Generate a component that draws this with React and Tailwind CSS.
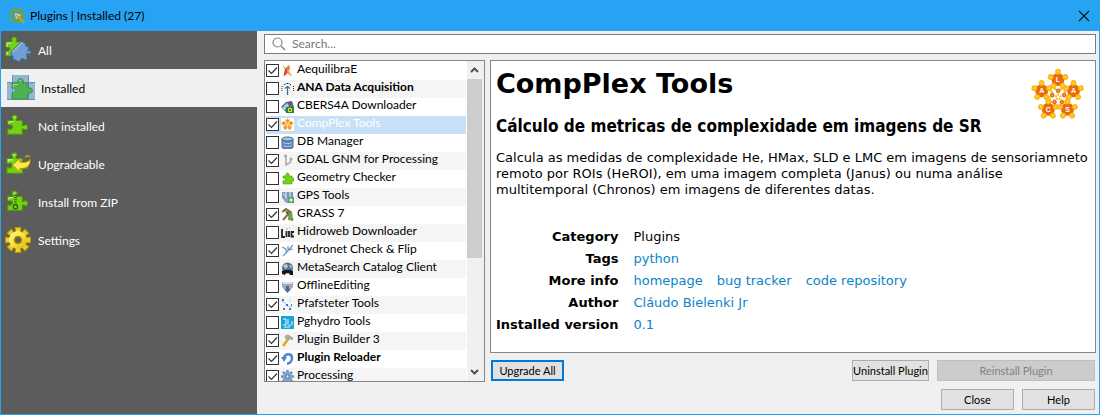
import React from "react";

const PUZZLE =
  "M2 7h6c1-1-1-2-1-4 0-3 6-3 6 0 0 2-2 3-1 4h7v6c1 1 2-1 4-1 3 0 3 6 0 6-2 0-3-2-4-1v6H2v-6c1-1 2 1 4 0 2-1 2-4 0-5-2 0-3 1-4 0z";

function Puzzle({ fill = "#73d216", stroke = "#4e9a06" }) {
  return (
    <>
      <path d={PUZZLE} fill={fill} stroke={stroke} strokeWidth="1.2" strokeLinejoin="round" />
      <path d="M3.500 11V8.500h5M9 4l2-1.500" fill="none" stroke="#fff" strokeOpacity=".65" strokeWidth="1.2" />
    </>
  );
}

function QgisLogo() {
  return (
    <svg viewBox="0 0 16 16" className="size-4" aria-hidden="true">
      <circle cx="8" cy="7.500" r="5.800" fill="none" stroke="#7f9f2b" strokeWidth="3" />
      <path d="M9 8.500l6 6" stroke="#a5ad2e" strokeWidth="3" />
      <path d="M6 5l6 2-5 4z" fill="#f5e08a" />
      <path d="M7 6l3 2-2 2z" fill="#ee7913" />
    </svg>
  );
}

function AllIcon() {
  return (
    <svg viewBox="0 0 28 28" className="size-7" aria-hidden="true">
      <path d="M2 6h6c0-2-1-5 2-5s3 3 2 5h5v14H2v-5c2 0 4 0 4-2s-2-2-4-2z" fill="#73d216" stroke="#4e9a06" />
      <path d="M3 11V7h5M3 19v-3" fill="none" stroke="#d8f7b0" />
      <path
        d="M7 16L18 5l4 3c-1 2 0 3 2 2l1 3-2 2c2-1 5 0 4 2s-3 1-4 0v7h-3c0-2-3-2-3 0l-3 2-2-2H9v-4c-2 1-2-1-2-4z"
        fill="#729fcf" stroke="#3465a4" strokeLinejoin="round"
      />
      <path d="M8.500 16L18 6.500" stroke="#cfe0f4" />
    </svg>
  );
}

function InstalledIcon() {
  return (
    <svg viewBox="0 0 28 26" className="h-[26px] w-7" aria-hidden="true">
      <path d="M5 0h17v7h6v18H0V7h5z" fill="#93b7d0" />
      <path d="M5.500 0v25M21.500 0v25M0 7.500h28M0 24.500h28" stroke="#6a93ae" fill="none" />
      <path d="M5 8h6c-2-6 7-6 5 0h5v5c6-1 6 6 0 5v6H5v-6c5 0 5-5 0-5z" fill="#4db34f" stroke="#3a8c5a" />
      <path d="M6.500 12V9.500H11M12 6l2-1" stroke="#a5dbab" fill="none" />
    </svg>
  );
}

function NotInstalledIcon() {
  return (
    <svg viewBox="0 0 28 27" className="h-6 w-6" aria-hidden="true">
      <Puzzle />
    </svg>
  );
}

function UpgradeIcon() {
  return (
    <svg viewBox="0 0 28 26" className="h-6 w-7" aria-hidden="true">
      <Puzzle />
      <path d="M21 5c3-3 7-2 6 1-1-1-3-1-5 0z" fill="#c4a000" />
      <path d="M8 14l8-7v4c6 1 10-1 11-3 1 7-4 10-11 10v4z" fill="#fce94f" stroke="#b89500" strokeLinejoin="round" />
    </svg>
  );
}

function ZipIcon() {
  return (
    <svg viewBox="0 0 28 27" className="h-6 w-6" aria-hidden="true">
      <Puzzle />
      <path d="M11 5v12" stroke="#3a6310" strokeWidth="3.500" strokeDasharray="1.300 1.300" />
      <circle cx="11" cy="19" r="2.500" fill="#73d216" stroke="#2e5a06" strokeWidth="1.500" />
    </svg>
  );
}

function GearIcon() {
  return (
    <svg viewBox="-14 -14 28 28" className="size-7" aria-hidden="true">
      <defs>
        <linearGradient id="gold" x1="0" y1="0" x2="1" y2="1">
          <stop offset="0" stopColor="#fff7a8" />
          <stop offset=".5" stopColor="#fbe233" />
          <stop offset="1" stopColor="#d6b000" />
        </linearGradient>
      </defs>
      <g fill="#ecd030" stroke="#b79400">
        {[0, 45, 90, 135].map((a) => (
          <path key={a} d="M-3-12.500h6l-1 6v13l1 6h-6l1-6v-13z" transform={`rotate(${a})`} />
        ))}
      </g>
      <circle r="9" fill="url(#gold)" />
      <circle r="3.500" fill="#5c5c5c" stroke="#a98a00" strokeWidth="1.500" />
    </svg>
  );
}

function CompPlexLogo({ className, viewBox = "0 0 64 58" }) {
  const nodes = [
    ["L", 32, 12.5],
    ["A", 47.5, 23.7],
    ["S", 41.5, 42.3],
    ["C", 22.3, 42.3],
    ["A", 15.7, 23.7],
  ];
  const spokes = [0, 72, 144, 216, 288];
  return (
    <svg viewBox={viewBox} className={className} aria-hidden="true">
      <rect width="64" height="58" fill="#fff" />
      {nodes.map(([letter, x, y]) => (
        <g key={`${x}-${y}`} transform={`translate(${x} ${y})`}>
          <circle r="6.500" fill="#e86a0a" />
          {spokes.map((a) => (
            <g key={a} transform={`rotate(${a})`}>
              <circle cy="-7.800" r="2.900" fill="#fbba13" />
              <circle cy="-7.800" r="1" fill="#fdd873" />
            </g>
          ))}
          <text y="2.500" textAnchor="middle" fontSize="7" fontWeight="700" fill="#fff" fontFamily="Liberation Sans, sans-serif">
            {letter}
          </text>
        </g>
      ))}
      {spokes.map((a) => (
        <g key={a} transform={`translate(32.2 30) rotate(${a})`}>
          <circle cx="3" cy="-8" r="1.300" fill="#fbba13" />
          <circle cx="-3" cy="-8" r="1.300" fill="#fbba13" />
          <circle cy="-6.200" r="2.300" fill="#e86a0a" />
          <circle cy="-6.200" r=".7" fill="#f9c9a0" />
          <circle cy="-2.300" r="1.100" fill="#fbba13" />
        </g>
      ))}
    </svg>
  );
}

const icons = {
  aequilibrae: (
    <>
      <path d="M1 2c3 1 4 5 1 10 3 0 4-4 3-7-1-2-2-3-4-3z" fill="#7fae3a" />
      <path d="M8 1c2 4-1 9-5 11 0-4 1-8 5-11z" fill="#e2452c" />
      <path d="M8 1c-1 6 1 9 4 11-4 0-6-3-6-6 0-2 1-4 2-5z" fill="#f0a03c" />
    </>
  ),
  ana: (
    <>
      <path d="M6.500 4v9M4 6.500l2.500-2L9 6.500" stroke="#3b6ea8" strokeWidth="1.300" fill="none" />
      <path d="M3 3l2-1.500h3L10 3" stroke="#333" strokeDasharray="2 1" fill="none" />
      <path d="M1 4v6M12.500 4v6" stroke="#222" strokeDasharray="1 1" />
    </>
  ),
  cbers: (
    <>
      <path d="M0 7l5-5 6-1 2 6-7 6z" fill="#46708f" />
      <path d="M1 8l5-5 2 3-4 4z" fill="#b9cbd9" />
      <path d="M7 3l3-2 1 4z" fill="#b33" />
      <rect x="5" y="7" width="8" height="6" fill="#1c8c3a" />
      <circle cx="9" cy="10" r="2.200" fill="#ffdf2b" />
      <circle cx="9" cy="10" r="1" fill="#234a9c" />
    </>
  ),
  db: (
    <>
      <path d="M1 3v8c0 3 11 3 11 0V3z" fill="#5f88b5" stroke="#41658e" />
      <ellipse cx="6.500" cy="3" rx="5.500" ry="2" fill="#a9c5e2" stroke="#41658e" />
      <path d="M1.500 6c1 2 9 2 10 0M1.500 9c1 2 9 2 10 0" stroke="#b5cce4" fill="none" />
    </>
  ),
  branch: (
    <>
      <path d="M5 2v10M5 10c3 0 5-2 5-5" stroke="#a8a8a8" strokeWidth="1.500" fill="none" />
      <circle cx="4.500" cy="2" r="1.500" fill="#a8a8a8" />
      <circle cx="10" cy="5" r="1.500" fill="#a8a8a8" />
    </>
  ),
  puzzle: <path d="M2 4h3c-1-4 4-4 3 0h3v2c3-1 3 4 0 3v3H2V9c3 0 3-3 0-3z" fill="#73d216" stroke="#4e9a06" strokeWidth=".6" />,
  gps: (
    <>
      <rect x="1" y="2" width="11" height="6" fill="#7898bc" />
      <path d="M2 3l3 4M5 2v6M9 2v6M2 9l4 3" stroke="#e5edf5" />
      <path d="M1 8l4 5h3V8z" fill="#93a5ba" />
      <rect x="7" y="7" width="6" height="6" fill="#5aa06a" />
      <path d="M10 8v4M8 10h4" stroke="#fff" />
    </>
  ),
  grass: (
    <>
      <path d="M1 4l4-3 3 2-2 2 6 7M2 12l8-9" stroke="#8c713f" strokeWidth="2" fill="none" />
      <path d="M7 12c0-5 2-8 4-9l1 10z" fill="#6e9c50" />
      <path d="M3 2l4 3" stroke="#444" />
    </>
  ),
  hidroweb: (
    <>
      <path d="M1 3v8h3M5.500 5v6M8 5v6M13 6h-2.500v4.500H13" stroke="#222" strokeWidth="1.800" fill="none" />
      <path d="M5 3h2M8 2h1" stroke="#7fb3d0" />
    </>
  ),
  hydronet: (
    <>
      <path d="M2 12l3-3 7-8M5 9V5L1 3M7 6V2M8 6l4-1" stroke="#5b9fd0" strokeWidth="1.200" fill="none" />
      <path d="M3 4l2 1M8 5l2-2" stroke="#d06a6a" />
    </>
  ),
  metasearch: (
    <>
      <circle cx="6.500" cy="6" r="5.500" fill="#54718f" />
      <path d="M2 3l4-1 1 3-3 2zM8 3l3 1-1 3z" fill="#b8cada" />
      <path d="M1 12V9l3-1h5l3 1v4H9l-1-2H5l-1 2z" fill="#151515" />
    </>
  ),
  offline: (
    <>
      <path d="M1 2h11v5l-3 3H4L1 7z" fill="#a3adb8" />
      <path d="M2 2h9v2H2z" fill="#dde2e8" />
      <path d="M5 6h3v3h2l-3.500 4L3 9h2z" fill="#456b9b" />
    </>
  ),
  pfafsteter: (
    <>
      <rect width="13" height="13" fill="#f4f7fa" />
      <path d="M0 3l4 2 2 3 5 1M8 1l2 3" stroke="#a8d0df" fill="none" />
      <path d="M1 2h2M5 7h2M10 7h1M2 11h2M8 11h2" stroke="#2a36c0" strokeWidth="1.500" />
    </>
  ),
  pghydro: (
    <>
      <rect width="13" height="13" fill="#18a6d8" />
      <path d="M2 3h3v6H2M7 3v5c0 2 4 2 4 0V5M3 11h6" stroke="#e5f6fc" fill="none" />
    </>
  ),
  builder: (
    <>
      <path d="M2 12l6-8" stroke="#e3a324" strokeWidth="2.500" />
      <path d="M4 2l3-1 5 3-1 2-3-2-3 1z" fill="#aab0b6" stroke="#7b8086" strokeWidth=".5" />
    </>
  ),
  reloader: (
    <>
      <path d="M3 6c1-5 8-5 8 0 0 4-2 5-5 6" stroke="#4d86d2" strokeWidth="2.500" fill="none" />
      <path d="M0 5h6l-3 5z" fill="#4d86d2" />
    </>
  ),
  processing: (
    <>
      {[0, 45, 90, 135].map((a) => (
        <rect key={a} x="5.200" y="0" width="2.600" height="13" fill="#6b93c4" transform={`rotate(${a} 6.5 6.5)`} />
      ))}
      <circle cx="6.500" cy="6.500" r="4.500" fill="#7ea3d0" />
      <circle cx="6.500" cy="6.500" r="1.700" fill="#dfe9f4" stroke="#4a719f" />
    </>
  ),
};

const plugins = [
  { name: "AequilibraE", icon: "aequilibrae", on: true },
  { name: "ANA Data Acquisition", icon: "ana", bold: true },
  { name: "CBERS4A Downloader", icon: "cbers" },
  { name: "CompPlex Tools", icon: "compplex", on: true, selected: true },
  { name: "DB Manager", icon: "db" },
  { name: "GDAL GNM for Processing", icon: "branch", on: true },
  { name: "Geometry Checker", icon: "puzzle" },
  { name: "GPS Tools", icon: "gps" },
  { name: "GRASS 7", icon: "grass", on: true },
  { name: "Hidroweb Downloader", icon: "hidroweb" },
  { name: "Hydronet Check & Flip", icon: "hydronet", on: true },
  { name: "MetaSearch Catalog Client", icon: "metasearch" },
  { name: "OfflineEditing", icon: "offline" },
  { name: "Pfafsteter Tools", icon: "pfafsteter", on: true },
  { name: "Pghydro Tools", icon: "pghydro" },
  { name: "Plugin Builder 3", icon: "builder", on: true },
  { name: "Plugin Reloader", icon: "reloader", on: true, bold: true },
  { name: "Processing", icon: "processing", on: true },
];

const tabs = [
  { name: "All", Icon: AllIcon },
  { name: "Installed", Icon: InstalledIcon, active: true },
  { name: "Not installed", Icon: NotInstalledIcon },
  { name: "Upgradeable", Icon: UpgradeIcon },
  { name: "Install from ZIP", Icon: ZipIcon },
  { name: "Settings", Icon: GearIcon },
];

function PluginRow({ plugin }) {
  const tone = plugin.selected ? "bg-[#c7e0f7] text-white" : "odd:bg-white even:bg-[#f5f5f5]";
  return (
    <li className={`h-[18px] ${tone}`}>
      <label className="flex h-full items-center">
        <span className="mb-px grid shrink-0">
          <input
            type="checkbox"
            defaultChecked={plugin.on}
            className="peer col-start-1 row-start-1 size-[13px] appearance-none border border-[#333] bg-white"
          />
          <svg
            viewBox="0 0 13 13"
            className="pointer-events-none invisible col-start-1 row-start-1 size-[13px] peer-checked:visible"
            aria-hidden="true"
          >
            <path d="M2.500 6.500l3 3 5.500-6" fill="none" stroke="#333" strokeWidth="1.200" />
          </svg>
        </span>
        {plugin.icon === "compplex" ? (
          <CompPlexLogo viewBox="4 1 56 56" className="mb-px ml-0.5 size-[13px] shrink-0" />
        ) : (
          <svg viewBox="0 0 13 13" className="mb-px ml-0.5 size-[13px] shrink-0" aria-hidden="true">
            {icons[plugin.icon]}
          </svg>
        )}
        <span className={`mb-1 ml-[3px] leading-[14px] whitespace-nowrap ${plugin.bold ? "font-bold" : ""}`}>{plugin.name}</span>
      </label>
    </li>
  );
}

function Chevron({ down }) {
  return (
    <svg viewBox="0 0 9 6" className="h-1.5 w-[9px]" aria-hidden="true">
      <path d={down ? "M1 1l3.500 3.500L8 1" : "M1 5l3.500-3.500L8 5"} fill="none" stroke="#505050" strokeWidth="2" />
    </svg>
  );
}

function Field({ label, children }) {
  return (
    <tr className="h-[22px]">
      <th scope="row" className="pr-[15px] text-right font-bold whitespace-nowrap">{label}</th>
      <td>{children}</td>
    </tr>
  );
}

const button = "h-[21px] border border-[#adadad] bg-[#e1e1e1] text-center leading-4 whitespace-nowrap";
const link = "text-[#0a84c6]";

export default function App() {
  return (
    <div className="flex h-screen flex-col border border-[#26a4f3] bg-[#f0f0f0] font-['Lato',sans-serif] text-[12px] text-black">
      <header className="flex h-[30px] shrink-0 items-center bg-[#26a4f3] pr-[9px] pl-2">
        <QgisLogo />
        <h1 className="ml-[5px]">Plugins | Installed (27)</h1>
        <button aria-label="Close window" className="ml-auto">
          <svg viewBox="0 0 12 12" className="size-3" aria-hidden="true">
            <path d="M1 1l10 10M11 1L1 11" stroke="#111" strokeWidth="1.100" />
          </svg>
        </button>
      </header>

      <div className="flex min-h-0 flex-1">
        <nav className="w-64 shrink-0 bg-[#5c5c5c] text-white">
          {tabs.map(({ name, Icon, active }) => (
            <button
              key={name}
              className={`flex h-[38px] w-full items-center text-left ${active ? "gap-1.5 bg-[#f0f0f0] pl-1.5 text-black" : "gap-1.5 pl-[3px]"}`}
            >
              <span className="flex w-7 shrink-0 justify-center"><Icon /></span>
              <span className="pt-0.5">{name}</span>
            </button>
          ))}
        </nav>

        <main className="flex min-w-0 flex-1 flex-col pt-[3px] pr-[3px] pb-1 pl-[7px]">
          <label className="flex h-5 shrink-0 items-center border border-[#7a7a7a] bg-white pl-[7px]">
            <svg viewBox="0 0 14 14" className="size-3.5 shrink-0" aria-hidden="true">
              <circle cx="5.500" cy="5.500" r="4.500" fill="none" stroke="#8a8a8a" strokeWidth="1.200" />
              <path d="M9 9l4 4" stroke="#8a8a8a" strokeWidth="1.600" />
            </svg>
            <input
              type="text"
              aria-label="Search"
              placeholder="Search..."
              className="ml-1.5 min-w-0 flex-1 outline-none placeholder:text-[#777]"
            />
          </label>

          <div className="mt-1.5 flex min-h-0 flex-1 gap-[5px]">
            <section className="mb-7 flex w-[221px] shrink-0 border border-[#828790] bg-white">
              <ul className="min-w-0 flex-1 overflow-hidden pt-px pl-px">
                {plugins.map((p) => <PluginRow key={p.name} plugin={p} />)}
              </ul>
              <div className="ml-px flex w-[17px] flex-col bg-[#f0f0f0] pr-0.5">
                <button aria-label="Scroll up" className="flex h-[18px] shrink-0 items-center justify-center"><Chevron /></button>
                <div className="min-h-0 flex-1"><div className="h-[63%] bg-[#cdcdcd]" /></div>
                <button aria-label="Scroll down" className="flex h-[18px] shrink-0 items-center justify-center"><Chevron down /></button>
              </div>
            </section>

            <section className="flex min-w-0 flex-1 flex-col">
              <article className="min-h-0 flex-1 overflow-hidden border border-[#828790] bg-white px-[5px] pt-1.5 font-['DejaVu_Sans',sans-serif] text-[13px] leading-4">
                <div className="flex justify-between">
                  <div>
                    <h2 className="mt-px text-[27px] leading-8 font-bold">CompPlex Tools</h2>
                    <h3 className="mt-4 font-['DejaVu_Sans_Condensed','DejaVu_Sans',sans-serif] text-[17px] leading-5 font-bold">
                      Cálculo de metricas de complexidade em imagens de SR
                    </h3>
                  </div>
                  <CompPlexLogo className="h-[58px] w-16 shrink-0" />
                </div>
                <p className="mt-3.5">
                  Calcula as medidas de complexidade He, HMax, SLD e LMC em imagens de sensoriamneto remoto por ROIs (HeROI), em uma
                  imagem completa (Janus) ou numa análise multitemporal (Chronos) em imagens de diferentes datas.
                </p>
                <table className="mt-7">
                  <tbody>
                    <Field label="Category">Plugins</Field>
                    <Field label="Tags"><a href="#python" className={link}>python</a></Field>
                    <Field label="More info">
                      <span className="flex gap-3.5">
                        <a href="#homepage" className={link}>homepage</a>
                        <a href="#tracker" className={link}>bug tracker</a>
                        <a href="#code" className={link}>code repository</a>
                      </span>
                    </Field>
                    <Field label="Author"><a href="#author" className={link}>Cláudo Bielenki Jr</a></Field>
                    <Field label="Installed version"><a href="#version" className={link}>0.1</a></Field>
                  </tbody>
                </table>
              </article>
              <div className="mt-[7px] flex shrink-0 gap-2 px-px text-[11px]">
                <button className="h-[21px] w-[73px] border-2 border-[#0078d7] bg-[#e1e1e1] leading-4 whitespace-nowrap">Upgrade All</button>
                <button className={`${button} ml-auto w-[77px]`}>Uninstall Plugin</button>
                <button disabled className="h-[21px] w-[158px] border border-[#bfbfbf] bg-[#cccccc] leading-4 text-[#838383]">Reinstall Plugin</button>
              </div>
              <div className="mt-2 flex shrink-0 justify-end gap-2 px-px text-[11px]">
                <button className={`${button} w-[73px]`}>Close</button>
                <button className={`${button} w-[73px]`}>Help</button>
              </div>
            </section>
          </div>
        </main>
      </div>
    </div>
  );
}
